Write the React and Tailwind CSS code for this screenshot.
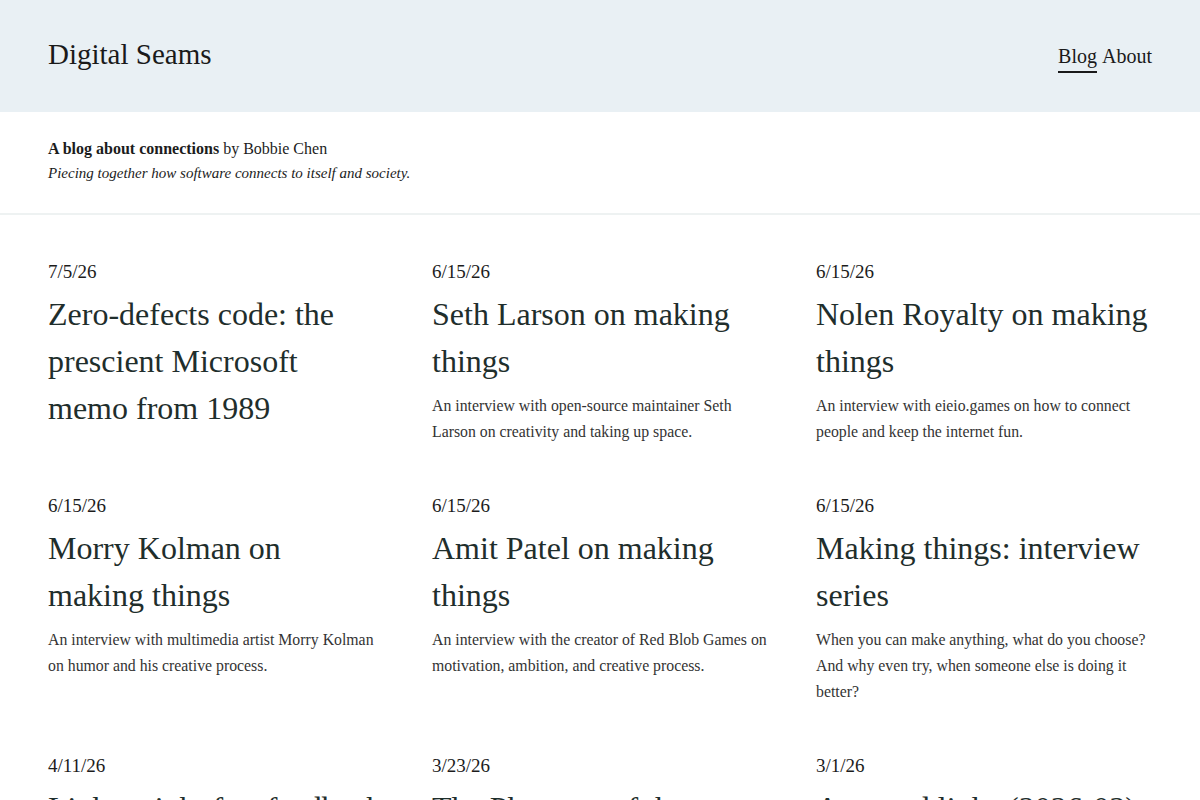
import React from 'react';

const posts = [
  {
    date: '7/5/26',
    title: 'Zero-defects code: the prescient Microsoft memo from 1989',
  },
  {
    date: '6/15/26',
    title: 'Seth Larson on making things',
    summary: 'An interview with open-source maintainer Seth Larson on creativity and taking up space.',
  },
  {
    date: '6/15/26',
    title: 'Nolen Royalty on making things',
    summary: 'An interview with eieio.games on how to connect people and keep the internet fun.',
  },
  {
    date: '6/15/26',
    title: 'Morry Kolman on making things',
    summary: 'An interview with multimedia artist Morry Kolman on humor and his creative process.',
  },
  {
    date: '6/15/26',
    title: 'Amit Patel on making things',
    summary: 'An interview with the creator of Red Blob Games on motivation, ambition, and creative process.',
  },
  {
    date: '6/15/26',
    title: 'Making things: interview series',
    summary:
      'When you can make anything, what do you choose? And why even try, when someone else is doing it better?',
  },
  {
    date: '4/11/26',
    title: 'Lightweight fast feedback loops',
    summary: 'Notes on building small tools that answer questions quickly.',
  },
  {
    date: '3/23/26',
    title: 'The Phantom of the Opera, in software',
    summary: 'On the systems that haunt us long after we ship them.',
  },
  {
    date: '3/1/26',
    title: 'Assorted links (2026-03)',
    summary: 'Things I read and enjoyed this month.',
  },
];

const serif = { fontFamily: '"Liberation Serif", "DejaVu Serif", serif' };

const App = () => {
  return (
    <div className="min-h-screen bg-white text-[#1c1c1c]" style={serif}>
      <header className="bg-[#e9f0f4] h-[112px] px-12 flex items-center justify-between">
        <a href="#" className="text-[29px] text-[#1a1a1a] leading-none -mt-[4px]">
          Digital Seams
        </a>
        <nav className="flex gap-[5px] text-[20px] text-[#1a1a1a] leading-none">
          <a href="#" className="border-b-2 border-[#1a1a1a] pb-[5px] mt-[7px]">
            Blog
          </a>
          <a href="#" className="mt-[7px] pb-[7px]">About</a>
        </nav>
      </header>

      <section className="px-12 pt-[24px] h-[103px] border-b-2 border-[#eef2f2]">
        <p className="text-[16px] leading-[25px]">
          <strong className="font-bold">A blog about connections</strong> by Bobbie Chen
        </p>
        <p className="text-[15px] leading-[25px] italic">
          Piecing together how software connects to itself and society.
        </p>
      </section>

      <main className="px-12 pt-[44px] pb-16 grid grid-cols-3 gap-x-12 gap-y-12">
        {posts.map((post, i) => (
          <article key={i} className="flex flex-col">
            <p className="text-[19px] leading-[26px] text-[#1c1c1c]">{post.date}</p>
            <h2 className="mt-[6px] text-[32px] leading-[47px] text-[#1f2e2c]">
              <a href="#">{post.title}</a>
            </h2>
            {post.summary && (
              <p className="mt-[8px] text-[15.8px] leading-[26px] text-[#333]">{post.summary}</p>
            )}
          </article>
        ))}
      </main>
    </div>
  );
};

export default App;
